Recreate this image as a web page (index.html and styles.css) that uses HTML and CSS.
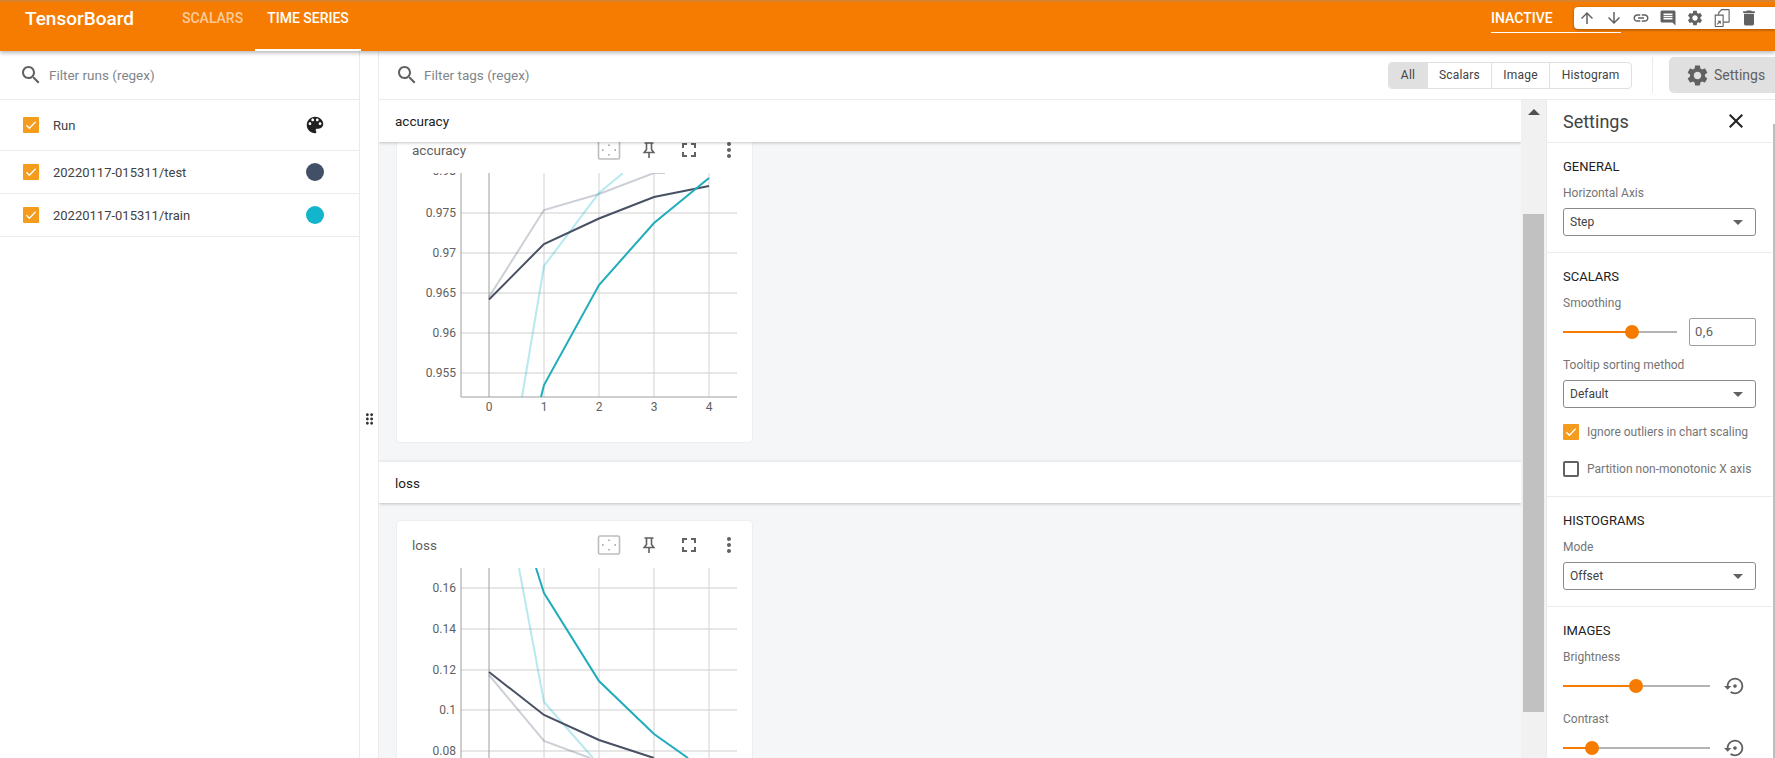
FILE: index.html
```html
<!DOCTYPE html>
<html lang="en">
<head>
<meta charset="utf-8">
<title>TensorBoard</title>
<link rel="stylesheet" href="styles.css">
</head>
<body>
<svg class="defs" width="0" height="0" aria-hidden="true">
  <symbol id="i-up" viewBox="0 0 24 24"><path d="M4 12l1.41 1.41L11 7.83V20h2V7.83l5.58 5.59L20 12l-8-8-8 8z"/></symbol>
  <symbol id="i-down" viewBox="0 0 24 24"><path d="M20 12l-1.41-1.41L13 16.17V4h-2v12.17l-5.58-5.59L4 12l8 8 8-8z"/></symbol>
  <symbol id="i-link" viewBox="0 0 24 24"><path d="M3.9 12c0-1.71 1.39-3.1 3.1-3.1h4V7H7c-2.76 0-5 2.24-5 5s2.24 5 5 5h4v-1.9H7c-1.71 0-3.1-1.39-3.1-3.1zM8 13h8v-2H8v2zm9-6h-4v1.9h4c1.71 0 3.1 1.39 3.1 3.1s-1.39 3.1-3.1 3.1h-4V17h4c2.76 0 5-2.24 5-5s-2.24-5-5-5z"/></symbol>
  <symbol id="i-comment" viewBox="0 0 24 24"><path d="M21.99 4c0-1.1-.89-2-1.99-2H4c-1.1 0-2 .9-2 2v12c0 1.1.9 2 2 2h14l4 4-.01-18zM18 14H6v-2h12v2zm0-3H6V9h12v2zm0-3H6V6h12v2z"/></symbol>
  <symbol id="i-gear" viewBox="0 0 24 24"><path d="M19.14 12.94c.04-.3.06-.61.06-.94 0-.32-.02-.64-.07-.94l2.03-1.58c.18-.14.23-.41.12-.61l-1.92-3.32c-.12-.22-.37-.29-.59-.22l-2.39.96c-.5-.38-1.03-.7-1.62-.94l-.36-2.54c-.04-.24-.24-.41-.48-.41h-3.84c-.24 0-.43.17-.47.41l-.36 2.54c-.59.24-1.13.57-1.62.94l-2.39-.96c-.22-.08-.47 0-.59.22L2.74 8.87c-.12.21-.08.47.12.61l2.03 1.58c-.05.3-.09.63-.09.94s.02.64.07.94l-2.03 1.58c-.18.14-.23.41-.12.61l1.92 3.32c.12.22.37.29.59.22l2.39-.96c.5.38 1.03.7 1.62.94l.36 2.54c.05.24.24.41.48.41h3.84c.24 0 .44-.17.47-.41l.36-2.54c.59-.24 1.13-.56 1.62-.94l2.39.96c.22.08.47 0 .59-.22l1.92-3.32c.12-.22.07-.47-.12-.61l-2.01-1.58zM12 15.6c-1.98 0-3.6-1.62-3.6-3.6s1.62-3.6 3.6-3.6 3.6 1.62 3.6 3.6-1.62 3.6-3.6 3.6z"/></symbol>
  <symbol id="i-export" viewBox="0 0 24 24"><path d="M7.5 7.5V5l4-4.200h9a1 1 0 0 1 1 1V16.500a1 1 0 0 1-1 1H14" fill="none" stroke="currentColor" stroke-width="1.5"/><path d="M3 8.200h10.500v14.300a1 1 0 0 1-1 1H4a1 1 0 0 1-1-1z" fill="none" stroke="currentColor" stroke-width="1.5"/><path d="M5.500 20.500l4-4M6.500 16.300h3.200v3.200" fill="none" stroke="currentColor" stroke-width="1.4"/></symbol>
  <symbol id="i-delete" viewBox="0 0 24 24"><path d="M6 19c0 1.1.9 2 2 2h8c1.1 0 2-.9 2-2V7H6v12zM19 4h-3.5l-1-1h-5l-1 1H5v2h14V4z"/></symbol>
  <symbol id="i-search" viewBox="0 0 24 24"><path d="M15.5 14h-.79l-.28-.27C15.41 12.59 16 11.11 16 9.5 16 5.91 13.09 3 9.5 3S3 5.91 3 9.5 5.91 16 9.5 16c1.61 0 3.09-.59 4.23-1.57l.27.28v.79l5 4.99L20.49 19l-4.99-5zm-6 0C7.01 14 5 11.99 5 9.5S7.01 5 9.5 5 14 7.01 14 9.5 11.99 14 9.5 14z"/></symbol>
  <symbol id="i-palette" viewBox="0 0 24 24"><path d="M12 3c-4.97 0-9 4.03-9 9s4.03 9 9 9c.83 0 1.5-.67 1.5-1.5 0-.39-.15-.74-.39-1.01-.23-.26-.38-.61-.38-.99 0-.83.67-1.5 1.5-1.5H16c2.76 0 5-2.24 5-5 0-4.42-4.03-8-9-8zm-5.5 9c-.83 0-1.5-.67-1.5-1.5S5.67 9 6.5 9 8 9.67 8 10.5 7.33 12 6.5 12zm3-4C8.67 8 8 7.33 8 6.5S8.67 5 9.5 5s1.5.67 1.5 1.5S10.33 8 9.5 8zm5 0c-.83 0-1.5-.67-1.5-1.5S13.67 5 14.5 5s1.5.67 1.5 1.5S15.33 8 14.5 8zm3 4c-.83 0-1.5-.67-1.5-1.5S16.67 9 17.5 9s1.5.67 1.5 1.5-.67 1.5-1.5 1.5z"/></symbol>
  <symbol id="i-close" viewBox="0 0 24 24"><path d="M19 6.41L17.59 5 12 10.59 6.41 5 5 6.41 10.59 12 5 17.59 6.41 19 12 13.41 17.59 19 19 17.59 13.41 12z"/></symbol>
  <symbol id="i-reset" viewBox="0 0 24 24"><path d="M14 12c0-1.1-.9-2-2-2s-2 .9-2 2 .9 2 2 2 2-.9 2-2zm-2-9c-4.97 0-9 4.03-9 9H0l4 4 4-4H5c0-3.87 3.13-7 7-7s7 3.13 7 7-3.13 7-7 7c-1.51 0-2.91-.49-4.06-1.3l-1.42 1.44C8.04 20.3 9.94 21 12 21c4.97 0 9-4.03 9-9s-4.03-9-9-9z"/></symbol>
  <symbol id="i-full" viewBox="0 0 24 24"><path d="M7 14H5v5h5v-2H7v-3zm-2-4h2V7h3V5H5v5zm12 7h-3v2h5v-5h-2v3zM14 5v2h3v3h2V5h-5z"/></symbol>
  <symbol id="i-more" viewBox="0 0 24 24"><path d="M12 8c1.1 0 2-.9 2-2s-.9-2-2-2-2 .9-2 2 .9 2 2 2zm0 2c-1.1 0-2 .9-2 2s.9 2 2 2 2-.9 2-2-.9-2-2-2zm0 6c-1.1 0-2 .9-2 2s.9 2 2 2 2-.9 2-2-.9-2-2-2z"/></symbol>
  <symbol id="i-pin" viewBox="0 0 24 24"><path d="M7.5 5h9M9.500 5v6.500L7.200 14.500h9.600l-2.300-3V5M12 14.500V20" fill="none" stroke="currentColor" stroke-width="1.6"/></symbol>
  <symbol id="i-fit" viewBox="0 0 24 24"><rect x="1.500" y="3" width="21" height="18" rx="1.500" fill="none" stroke="#bdbdbd" stroke-width="1.600"/><path d="M12 6.500v1.600M12 15.900v1.600M5 12h1.600M17.400 12H19" stroke="#9e9e9e" stroke-width="1.500"/></symbol>
  <symbol id="i-drag" viewBox="0 0 24 24"><path d="M11 18c0 1.1-.9 2-2 2s-2-.9-2-2 .9-2 2-2 2 .9 2 2zm-2-8c-1.1 0-2 .9-2 2s.9 2 2 2 2-.9 2-2-.9-2-2-2zm0-6c-1.1 0-2 .9-2 2s.9 2 2 2 2-.9 2-2-.9-2-2-2zm6 4c1.1 0 2-.9 2-2s-.9-2-2-2-2 .9-2 2 .9 2 2 2zm0 2c-1.1 0-2 .9-2 2s.9 2 2 2 2-.9 2-2-.9-2-2-2zm0 6c-1.1 0-2 .9-2 2s.9 2 2 2 2-.9 2-2-.9-2-2-2z"/></symbol>
  <symbol id="i-check" viewBox="0 0 16 16"><path d="M3.400 8.200l3 3 6.200-6.400" fill="none" stroke="#fff" stroke-width="1.300"/></symbol>
</svg>

<header class="topbar">
  <div class="brand">TensorBoard</div>
  <nav class="tabs">
    <span class="tab">SCALARS</span>
    <span class="tab tab-active">TIME SERIES</span>
  </nav>
  <div class="top-right">
    <div class="inactive">INACTIVE</div>
    <div class="ext-toolbar">
      <svg class="ext-icon"><use href="#i-up"/></svg>
      <svg class="ext-icon"><use href="#i-down"/></svg>
      <svg class="ext-icon"><use href="#i-link"/></svg>
      <svg class="ext-icon"><use href="#i-comment"/></svg>
      <svg class="ext-icon"><use href="#i-gear"/></svg>
      <svg class="ext-icon"><use href="#i-export"/></svg>
      <svg class="ext-icon ext-icon-big"><use href="#i-delete"/></svg>
    </div>
  </div>
</header>

<div class="layout">
  <aside class="runs">
    <div class="filter runs-filter">
      <svg class="search-icon"><use href="#i-search"/></svg>
      <span class="placeholder">Filter runs (regex)</span>
    </div>
    <div class="run-row run-head">
      <span class="check"><svg><use href="#i-check"/></svg></span>
      <span class="run-name">Run</span>
      <svg class="palette"><use href="#i-palette"/></svg>
    </div>
    <div class="run-row">
      <span class="check"><svg><use href="#i-check"/></svg></span>
      <span class="run-name">20220117-015311/test</span>
      <span class="dot dot-test"></span>
    </div>
    <div class="run-row">
      <span class="check"><svg><use href="#i-check"/></svg></span>
      <span class="run-name">20220117-015311/train</span>
      <span class="dot dot-train"></span>
    </div>
  </aside>

  <div class="resizer"><svg class="drag"><use href="#i-drag"/></svg></div>

  <main class="main">
    <div class="filter tags-filter">
      <svg class="search-icon"><use href="#i-search"/></svg>
      <span class="placeholder">Filter tags (regex)</span>
      <div class="types">
        <span class="type type-on">All</span>
        <span class="type type-scalars">Scalars</span>
        <span class="type type-image">Image</span>
        <span class="type type-hist">Histogram</span>
      </div>
      <div class="settings-btn">
        <svg class="settings-gear"><use href="#i-gear"/></svg>
        <span>Settings</span>
      </div>
    </div>

    <div class="content">
      <section class="cards">
        <h2 class="group-head">accuracy</h2>
        <div class="group-body group-scrolled">
          <article class="card">
            <div class="card-head">
              <span class="card-title">accuracy</span>
              <svg class="card-icon"><use href="#i-fit"/></svg>
              <svg class="card-icon"><use href="#i-pin"/></svg>
              <svg class="card-icon"><use href="#i-full"/></svg>
              <svg class="card-icon"><use href="#i-more"/></svg>
            </div>
            <svg class="chart" viewBox="396 173 357 270">
              <g class="grid-h">
                <path d="M461 213H737M461 253H737M461 293H737M461 333H737M461 373H737"/>
              </g>
              <g class="grid-v"><path d="M544 173V397M599 173V397M654 173V397M709 173V397"/></g>
              <path class="axis" d="M489 173V397M461 173V397M461 397H737"/>
              <g class="ytick">
                <text x="456" y="175">0.98</text>
                <text x="456" y="217">0.975</text>
                <text x="456" y="257">0.97</text>
                <text x="456" y="297">0.965</text>
                <text x="456" y="337">0.96</text>
                <text x="456" y="377">0.955</text>
              </g>
              <g class="xtick">
                <text x="489" y="411">0</text>
                <text x="544" y="411">1</text>
                <text x="599" y="411">2</text>
                <text x="654" y="411">3</text>
                <text x="709" y="411">4</text>
              </g>
              <polyline class="raw-test" points="489,297 544,210 599,194 654,173 665,173"/>
              <polyline class="raw-train" points="522,397 544,266 599,193 623,173"/>
              <polyline class="smooth-test" points="489,299.500 544,244 599,218.500 654,197 709,186"/>
              <polyline class="smooth-train" points="541,397 544,385 599,285 654,223 709,178"/>
            </svg>
          </article>
        </div>
        <h2 class="group-head group-head-next">loss</h2>
        <div class="group-body">
          <article class="card">
            <div class="card-head">
              <span class="card-title">loss</span>
              <svg class="card-icon"><use href="#i-fit"/></svg>
              <svg class="card-icon"><use href="#i-pin"/></svg>
              <svg class="card-icon"><use href="#i-full"/></svg>
              <svg class="card-icon"><use href="#i-more"/></svg>
            </div>
            <svg class="chart" viewBox="396 568 357 270">
              <g class="grid-h">
                <path d="M461 588H737M461 629H737M461 670H737M461 710H737M461 751H737"/>
              </g>
              <g class="grid-v"><path d="M544 568V792M599 568V792M654 568V792M709 568V792"/></g>
              <path class="axis" d="M489 568V792M461 568V792"/>
              <g class="ytick">
                <text x="456" y="592">0.16</text>
                <text x="456" y="633">0.14</text>
                <text x="456" y="674">0.12</text>
                <text x="456" y="714">0.1</text>
                <text x="456" y="755">0.08</text>
              </g>
              <polyline class="raw-test" points="489,675 544,741 590,758"/>
              <polyline class="raw-train" points="519,568 544,702 593,758"/>
              <polyline class="smooth-test" points="489,672 544,715 599,740 654,758"/>
              <polyline class="smooth-train" points="536,568 544,593 599,681 654,734 688,758"/>
            </svg>
          </article>
        </div>
      </section>

      <div class="scrollbar">
        <div class="scroll-arrow"></div>
        <div class="scroll-thumb"></div>
      </div>

      <aside class="settings">
        <div class="settings-title">
          <span>Settings</span>
          <svg class="close-icon"><use href="#i-close"/></svg>
        </div>
        <section class="set-sec">
          <h3 class="set-head">GENERAL</h3>
          <div class="set-label">Horizontal Axis</div>
          <div class="select"><span>Step</span><i class="caret"></i></div>
        </section>
        <section class="set-sec set-scalars">
          <h3 class="set-head">SCALARS</h3>
          <div class="set-label">Smoothing</div>
          <div class="slider-row">
            <div class="slider slider-short"><i class="fill fill-smooth"></i><i class="thumb"></i></div>
            <div class="num-input">0,6</div>
          </div>
          <div class="set-label set-label-tip">Tooltip sorting method</div>
          <div class="select"><span>Default</span><i class="caret"></i></div>
          <label class="opt opt-first"><span class="check"><svg><use href="#i-check"/></svg></span>Ignore outliers in chart scaling</label>
          <label class="opt"><span class="check check-off"></span>Partition non-monotonic X axis</label>
        </section>
        <section class="set-sec">
          <h3 class="set-head">HISTOGRAMS</h3>
          <div class="set-label">Mode</div>
          <div class="select"><span>Offset</span><i class="caret"></i></div>
        </section>
        <section class="set-sec set-last">
          <h3 class="set-head">IMAGES</h3>
          <div class="set-label">Brightness</div>
          <div class="slider-row slider-row-img">
            <div class="slider slider-long"><i class="fill fill-bright"></i><i class="thumb"></i></div>
            <svg class="reset-icon"><use href="#i-reset"/></svg>
          </div>
          <div class="set-label set-label-contrast">Contrast</div>
          <div class="slider-row slider-row-img">
            <div class="slider slider-long"><i class="fill fill-contrast"></i><i class="thumb"></i></div>
            <svg class="reset-icon"><use href="#i-reset"/></svg>
          </div>
        </section>
        <div class="thin-scroll"></div>
      </aside>
    </div>
  </main>
</div>
</body>
</html>
```
FILE: styles.css
```css
* { box-sizing: border-box; }
html, body { height: 100%; }
body {
  margin: 0;
  height: 758px;
  overflow: hidden;
  background: #fff;
  color: #424242;
  font-family: Roboto, "Liberation Sans", sans-serif;
  font-size: 13px;
  display: flex;
  flex-direction: column;
}
.defs { position: absolute; }
svg { fill: currentColor; display: block; }

/* top bar */
.topbar {
  height: 51px;
  flex: none;
  background: #f57c00;
  border-top: 2px solid #d9842b;
  color: #fff;
  display: flex;
  position: relative;
  z-index: 5;
  box-shadow: 0 2px 4px rgba(0,0,0,.28);
}
.brand {
  width: 170px;
  padding: 6px 0 0 25px;
  font-size: 19px;
  font-weight: 500;
  line-height: 22px;
}
.tabs { display: flex; }
.tab {
  padding: 7px 12px 0;
  font-size: 14px;
  font-weight: 500;
  line-height: 18px;
  color: rgba(255,255,255,.62);
}
.tab-active { color: #fff; border-bottom: 2px solid #fff; width: 106px; }
.top-right { margin-left: auto; display: flex; align-items: flex-start; }
.inactive {
  width: 130px;
  height: 31px;
  margin-right: -47px;
  padding-top: 7px;
  font-size: 14px;
  font-weight: 500;
  line-height: 18px;
  border-bottom: 1px solid #fff;
}
.ext-toolbar {
  position: relative;
  width: 201px;
  height: 22px;
  margin-top: 5px;
  padding-left: 4px;
  display: flex;
  align-items: center;
  background: #fff;
  border-radius: 4px 0 0 4px;
  box-shadow: 0 1px 3px rgba(0,0,0,.35);
  color: #616161;
}
.ext-icon { width: 18px; height: 18px; margin-right: 9px; flex: none; }
.ext-icon-big { width: 20px; height: 20px; margin-left: -1px; }

/* layout */
.layout { flex: 1; display: flex; min-height: 0; }
.runs { width: 360px; flex: none; border-right: 1px solid #ebebeb; }
.resizer {
  width: 19px;
  flex: none;
  display: flex;
  align-items: center;
  justify-content: center;
  border-right: 1px solid #ebebeb;
  padding-top: 29px;
}
.drag { width: 18px; height: 18px; color: #333; margin-left: 1px; }
.main { flex: 1; min-width: 0; display: flex; flex-direction: column; }

/* filters */
.filter {
  height: 49px;
  flex: none;
  display: flex;
  align-items: center;
  border-bottom: 1px solid #ebebeb;
}
.runs-filter { padding-left: 19px; }
.tags-filter { padding-left: 16px; }
.search-icon { width: 24px; height: 24px; color: #616161; flex: none; }
.placeholder { margin-left: 6px; font-size: 13.5px; color: #80868b; }
.tags-filter .placeholder { margin-left: 5px; }

.types {
  margin-left: auto;
  display: flex;
  height: 27px;
  border: 1px solid #e0e0e0;
  border-radius: 4px;
  overflow: hidden;
  font-size: 12px;
  line-height: 25px;
  color: #424242;
}
.type { display: block; text-align: center; border-left: 1px solid #e0e0e0; letter-spacing: .2px; }
.type-on { width: 38px; border-left: 0; background: #e0e0e0; }
.type-scalars { width: 64px; }
.type-image { width: 58px; }
.type-hist { width: 82px; }
.settings-btn {
  width: 106px;
  height: 36px;
  margin-left: 37px;
  position: relative;
  display: flex;
  align-items: center;
  padding-left: 16px;
  gap: 4px;
  background: #e0e0e0;
  border-radius: 5px 0 0 5px;
  color: #616161;
  font-size: 14px;
}
.settings-btn::before {
  content: "";
  position: absolute;
  left: -17px;
  top: 0;
  width: 1px;
  height: 36px;
  background: #ebebeb;
}
.settings-gear { width: 25px; height: 25px; flex: none; }

/* runs */
.run-row {
  display: flex;
  align-items: center;
  height: 43px;
  padding-left: 23px;
  border-bottom: 1px solid #ebebeb;
}
.run-head { height: 51px; }
.run-name { margin-left: 14px; flex: 1; }
.check {
  display: block;
  width: 16px;
  height: 16px;
  flex: none;
  border-radius: 1px;
  background: #f59b1d;
}
.check svg { width: 16px; height: 16px; }
.check-off { background: #fff; border: 2px solid #616161; border-radius: 2px; }
.palette { width: 22px; height: 22px; color: #212121; margin-right: 33px; flex: none; }
.dot { width: 18px; height: 18px; border-radius: 50%; margin-right: 35px; flex: none; }
.dot-test { background: #425066; }
.dot-train { background: #12b5cb; }

/* cards */
.content { flex: 1; display: flex; min-height: 0; }
.cards { flex: 1; min-width: 0; background: #f5f6f7; overflow: hidden; }
.group-head {
  position: relative;
  z-index: 2;
  margin: 0;
  height: 42px;
  padding-left: 16px;
  background: #fff;
  font-size: 13.5px;
  font-weight: 400;
  line-height: 42px;
  color: #212121;
  box-shadow: 0 1px 3px rgba(0,0,0,.22);
}
.group-head-next { border-top: 1px solid #ebebeb; }
.group-body { padding: 17px 17px 18px; }
.group-scrolled { margin-top: -34px; padding-top: 17px; }
.card {
  width: 357px;
  height: 318px;
  background: #fff;
  border: 1px solid #eceeef;
  border-radius: 4px;
}
.card-head {
  height: 47px;
  padding: 0 3px 0 15px;
  display: flex;
  align-items: center;
  color: #616161;
}
.card-title { flex: 1; font-size: 13.5px; }
.card-icon { width: 24px; height: 24px; margin: 0 8px; flex: none; }
.chart { width: 357px; height: 270px; margin-left: -1px; display: block; fill: none; }
.grid-h path { stroke: #e0e0e0; stroke-width: 1.4; }
.grid-v path { stroke: #d2d2d2; stroke-width: 1; }
.axis { stroke: #9e9e9e; stroke-width: 1; }
.chart text { fill: #616161; stroke: none; font-family: Roboto, sans-serif; font-size: 12px; }
.ytick text { text-anchor: end; }
.xtick text { text-anchor: middle; }
.chart polyline { fill: none; }
.raw-test { stroke: #425066; stroke-opacity: .27; stroke-width: 2; }
.raw-train { stroke: #12b5cb; stroke-opacity: .3; stroke-width: 2; }
.smooth-test { stroke: #485064; stroke-width: 2; }
.smooth-train { stroke: #20acbb; stroke-width: 2; }

/* scrollbar */
.scrollbar { width: 25px; flex: none; background: #f1f1f1; padding: 0 2px; }
.scroll-arrow {
  width: 0;
  height: 0;
  margin: 9px auto 0;
  border: 6px solid transparent;
  border-top: 0;
  border-bottom: 6px solid #505050;
}
.scroll-thumb { height: 498px; margin-top: 99px; background: #c1c1c1; }

/* settings */
.settings {
  width: 229px;
  flex: none;
  position: relative;
  overflow: hidden;
  padding-right: 3px;
  background: #fff;
  border-left: 1px solid #ebebeb;
}
.settings-title {
  height: 43px;
  padding: 0 24px 0 16px;
  display: flex;
  align-items: center;
  justify-content: space-between;
  border-bottom: 1px solid #ebebeb;
  font-size: 18px;
  color: #424242;
}
.close-icon { width: 24px; height: 24px; color: #212121; }
.set-sec { padding: 15px 16px 16px; border-bottom: 1px solid #ebebeb; }
.set-scalars { padding-bottom: 19px; }
.set-last { border-bottom: 0; }
.set-head {
  margin: 0;
  font-size: 13px;
  font-weight: 400;
  line-height: 18px;
  color: #212121;
}
.set-label { margin-top: 8px; font-size: 12px; line-height: 18px; color: #757575; }
.set-label-tip { margin-top: 10px; }
.set-label-contrast { margin-top: 11px; }
.select {
  margin-top: 6px;
  width: 193px;
  height: 28px;
  padding: 0 12px 0 6px;
  display: flex;
  align-items: center;
  justify-content: space-between;
  border: 1px solid #8a8a8a;
  border-radius: 3px;
  font-size: 12px;
  color: #424242;
}
.caret {
  display: block;
  width: 0;
  height: 0;
  border: 5px solid transparent;
  border-bottom: 0;
  border-top: 5px solid #616161;
}
.slider-row { display: flex; align-items: center; margin-top: 6px; height: 28px; }
.slider-row-img { margin-top: 7px; height: 26px; gap: 13px; }
.slider { position: relative; height: 2px; background: #b4b4b4; flex: none; }
.slider-short { width: 114px; }
.slider-long { width: 147px; }
.fill { position: relative; display: block; height: 2px; background: #f57c00; }
.thumb {
  position: absolute;
  top: -6px;
  width: 14px;
  height: 14px;
  margin-left: -7px;
  border-radius: 50%;
  background: #f57c00;
}
.fill-smooth { width: 69px; }
.fill-bright { width: 73px; }
.fill-contrast { width: 29px; }
.fill-smooth + .thumb { left: 69px; }
.fill-bright + .thumb { left: 73px; }
.fill-contrast + .thumb { left: 29px; }
.num-input {
  margin-left: 12px;
  width: 67px;
  height: 28px;
  padding-left: 5px;
  border: 1px solid #9e9e9e;
  border-radius: 2px;
  font-size: 13px;
  line-height: 26px;
  color: #616161;
  letter-spacing: .5px;
}
.reset-icon { width: 22px; height: 22px; color: #616161; flex: none; margin-left: 1px; }
.opt {
  display: flex;
  align-items: center;
  gap: 8px;
  height: 16px;
  margin-top: 21px;
  font-size: 12px;
  color: #757575;
  white-space: nowrap;
}
.opt-first { margin-top: 16px; }
.thin-scroll {
  position: absolute;
  right: 0;
  top: 24px;
  width: 2px;
  height: 640px;
  background: #bdbdbd;
}
```
